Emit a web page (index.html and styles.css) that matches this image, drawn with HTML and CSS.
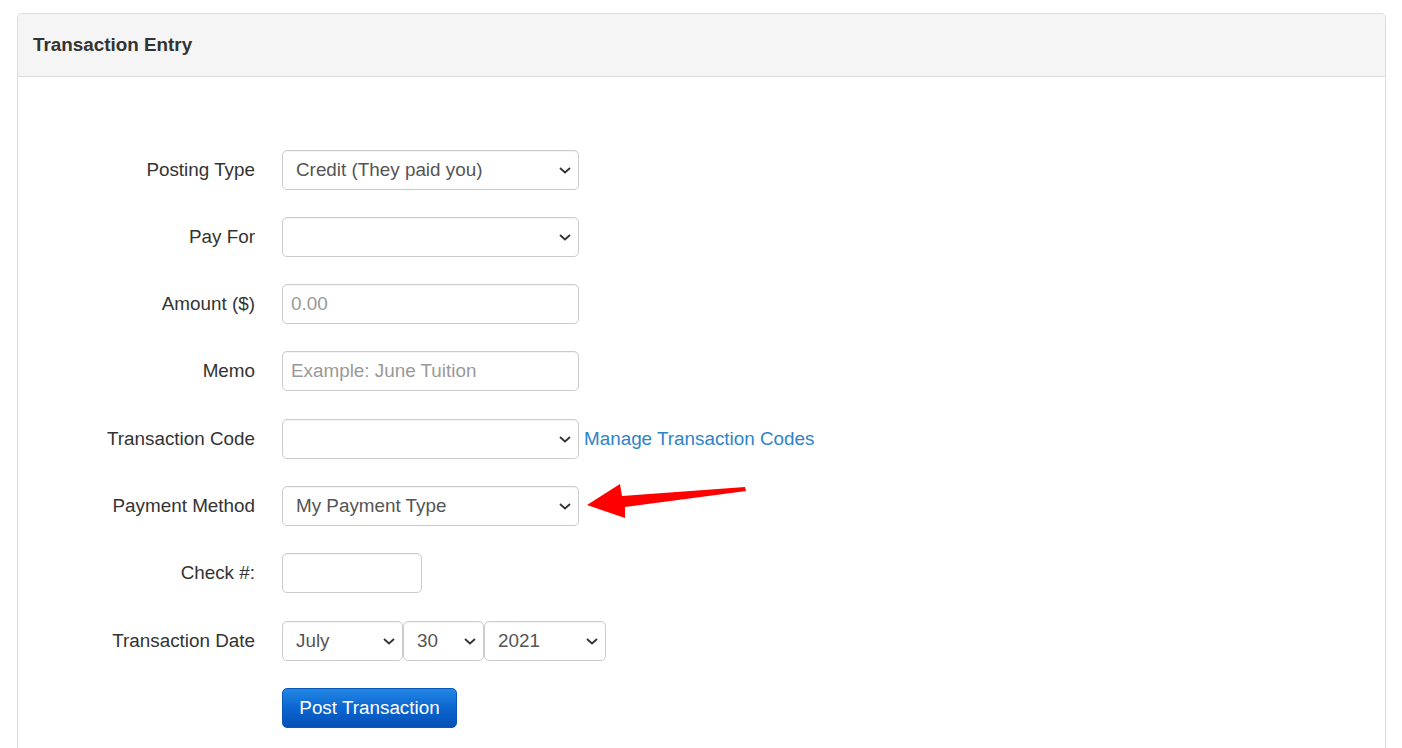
FILE: index.html
```html
<!DOCTYPE html>
<html lang="en">
<head>
<meta charset="utf-8">
<title>Transaction Entry</title>
<link rel="stylesheet" href="styles.css">
</head>
<body>
<div class="page">
  <div class="panel">
    <div class="panel-heading">
      <h3 class="panel-title">Transaction Entry</h3>
    </div>
    <div class="panel-body">
      <form class="form">
        <label class="label">Posting Type</label>
        <div class="controls">
          <div class="select-wrap w-main">
            <select class="control select"><option>Credit (They paid you)</option></select>
            <svg class="chev" viewBox="0 0 12 7" width="12" height="7"><path d="M1 1l5 4.5L11 1" fill="none" stroke="#333" stroke-width="1.8"/></svg>
          </div>
        </div>

        <label class="label">Pay For</label>
        <div class="controls">
          <div class="select-wrap w-main">
            <select class="control select"><option></option></select>
            <svg class="chev" viewBox="0 0 12 7" width="12" height="7"><path d="M1 1l5 4.5L11 1" fill="none" stroke="#333" stroke-width="1.8"/></svg>
          </div>
        </div>

        <label class="label">Amount ($)</label>
        <div class="controls">
          <input class="control input w-main" type="text" placeholder="0.00">
        </div>

        <label class="label">Memo</label>
        <div class="controls">
          <input class="control input w-main" type="text" placeholder="Example: June Tuition">
        </div>

        <label class="label">Transaction Code</label>
        <div class="controls">
          <div class="select-wrap w-main">
            <select class="control select"><option></option></select>
            <svg class="chev" viewBox="0 0 12 7" width="12" height="7"><path d="M1 1l5 4.5L11 1" fill="none" stroke="#333" stroke-width="1.8"/></svg>
          </div>
          <a class="link" href="#">Manage Transaction Codes</a>
        </div>

        <label class="label">Payment Method</label>
        <div class="controls arrow-host">
          <div class="select-wrap w-main">
            <select class="control select"><option>My Payment Type</option></select>
            <svg class="chev" viewBox="0 0 12 7" width="12" height="7"><path d="M1 1l5 4.5L11 1" fill="none" stroke="#333" stroke-width="1.8"/></svg>
          </div>
          <svg class="arrow" viewBox="0 0 165 40" width="165" height="40"><polygon points="2,23 35,2 37,14 160,5 161,9 40,25 40,36" fill="#ff0000"/></svg>
        </div>

        <label class="label">Check #:</label>
        <div class="controls">
          <input class="control input w-check" type="text">
        </div>

        <label class="label">Transaction Date</label>
        <div class="controls date">
          <div class="select-wrap w-month">
            <select class="control select"><option>July</option></select>
            <svg class="chev" viewBox="0 0 12 7" width="12" height="7"><path d="M1 1l5 4.5L11 1" fill="none" stroke="#333" stroke-width="1.8"/></svg>
          </div>
          <div class="select-wrap w-day">
            <select class="control select"><option>30</option></select>
            <svg class="chev" viewBox="0 0 12 7" width="12" height="7"><path d="M1 1l5 4.5L11 1" fill="none" stroke="#333" stroke-width="1.8"/></svg>
          </div>
          <div class="select-wrap w-year">
            <select class="control select"><option>2021</option></select>
            <svg class="chev" viewBox="0 0 12 7" width="12" height="7"><path d="M1 1l5 4.5L11 1" fill="none" stroke="#333" stroke-width="1.8"/></svg>
          </div>
        </div>

        <span class="label"></span>
        <div class="controls">
          <button class="btn" type="button">Post Transaction</button>
        </div>
      </form>
    </div>
  </div>
</div>
</body>
</html>
```

FILE: styles.css
```css
* { box-sizing: border-box; }

html, body {
  margin: 0;
  padding: 0;
  background: #fff;
  font-family: "Liberation Sans", Arial, sans-serif;
  font-size: 18.85px;
  color: #333;
}

.page {
  padding: 13px 16px 0 17px;
  height: 748px;
  overflow: hidden;
}

.panel {
  border: 1px solid #ddd;
  border-radius: 5px;
  min-height: 800px;
  background: #fff;
}

.panel-heading {
  height: 63px;
  background: #f5f5f5;
  border-bottom: 1px solid #ddd;
  border-radius: 5px 5px 0 0;
  padding: 0 15px;
  display: flex;
  align-items: center;
}

.panel-title {
  margin: 0;
  font-size: 18.85px;
  font-weight: bold;
  color: #333;
}

.panel-body {
  padding-top: 72.5px;
}

.form {
  display: grid;
  grid-template-columns: 237px 1fr;
  column-gap: 27px;
  row-gap: 27.3px;
}

.label {
  display: flex;
  align-items: center;
  justify-content: flex-end;
  height: 40px;
  color: #333;
}

.controls {
  display: flex;
  align-items: center;
  gap: 5px;
  height: 40px;
}

.controls.date { gap: 0; }

.arrow-host { position: relative; }

.arrow {
  position: absolute;
  left: 303px;
  top: -4px;
}

.control {
  height: 40px;
  border: 1px solid #ccc;
  border-radius: 5px;
  background: #fff;
  font-family: inherit;
  font-size: 18.85px;
  color: #555;
  box-shadow: inset 0 1px 1px rgba(0,0,0,0.05);
  margin: 0;
}

.input {
  padding: 0 8px;
}

.input::placeholder { color: #999; }

.select-wrap {
  position: relative;
  height: 40px;
}

.select {
  -webkit-appearance: none;
  appearance: none;
  width: 100%;
  padding: 0 30px 0 13px;
}

.chev {
  position: absolute;
  right: 8px;
  top: 17px;
  pointer-events: none;
}

.w-main { width: 297px; }
.w-check { width: 140px; }
.w-month { width: 121px; }
.w-day { width: 81px; }
.w-year { width: 122px; }

.link {
  color: #2f83c7;
  text-decoration: none;
}

.btn {
  width: 175px;
  height: 40px;
  border: 1px solid #0a58b5;
  border-radius: 5px;
  background: linear-gradient(to bottom, #2386e4 0%, #0b66d0 50%, #0451b5 100%);
  color: #fff;
  font-family: inherit;
  font-size: 18.85px;
  padding: 0;
  cursor: pointer;
}
```
